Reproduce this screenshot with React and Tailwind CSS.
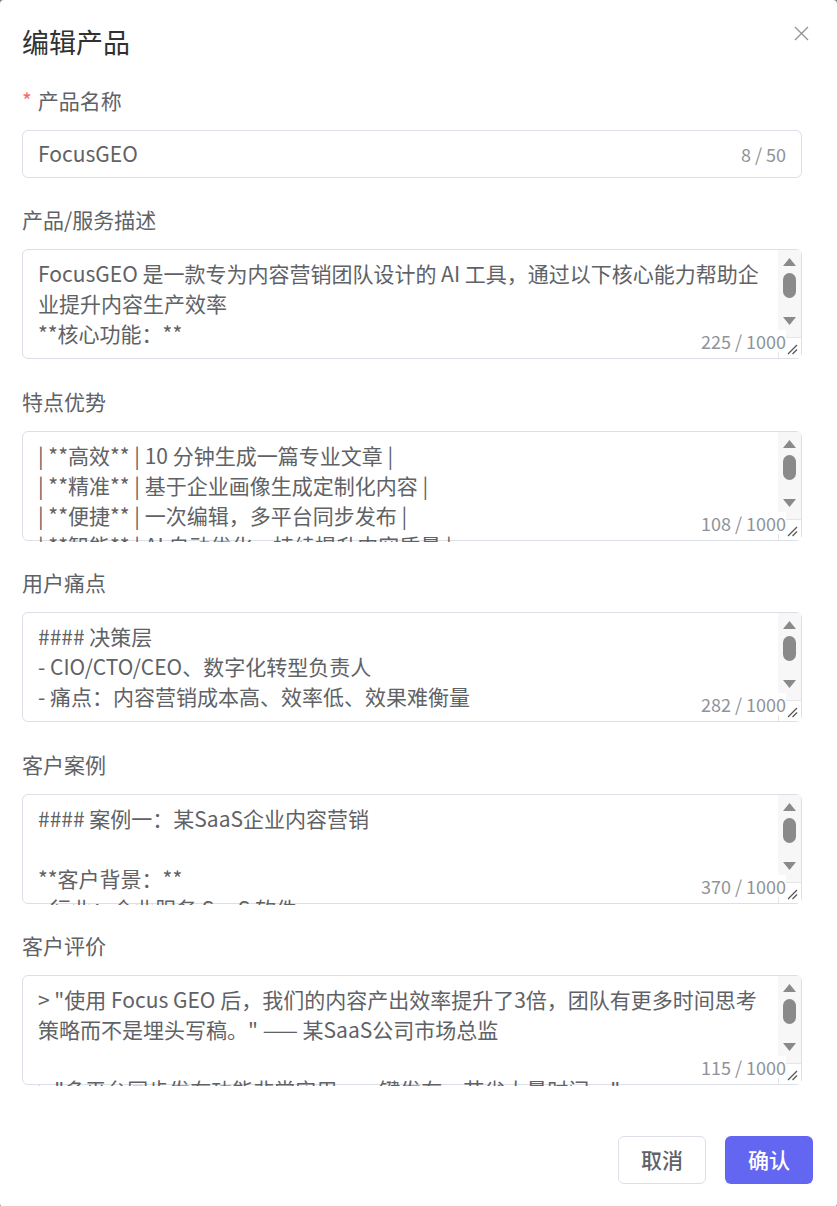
import React from "react";

const FONT = { fontFamily: '"Noto Sans CJK SC", "Noto Sans", sans-serif' };

const ScrollBar = () => (
  <div className="absolute right-0 top-0 w-[23px] h-[88px] bg-[#f7f7f7] flex flex-col items-center pt-[8px]">
    <svg width="13" height="8" viewBox="0 0 13 8">
      <polygon points="6.5,0 13,8 0,8" fill="#8a8a8a" />
    </svg>
    <div className="w-[13px] h-[25px] rounded-full bg-[#8a8a8a] mt-[7px]" />
    <svg width="13" height="8" viewBox="0 0 13 8" className="mt-[19px]">
      <polygon points="0,0 13,0 6.5,8" fill="#8a8a8a" />
    </svg>
  </div>
);

const ResizeCorner = () => (
  <div className="absolute right-0 bottom-0 w-[23px] h-[21px] bg-white border-t border-l border-[#e6e6e6] flex items-end justify-end pr-[3px] pb-[3px]">
    <svg width="11" height="11" viewBox="0 0 11 11">
      <line x1="10" y1="1" x2="1" y2="10" stroke="#555" strokeWidth="1.2" />
      <line x1="10" y1="5.5" x2="5.5" y2="10" stroke="#555" strokeWidth="1.2" />
    </svg>
  </div>
);

const TextBox = ({ lines, count }) => (
  <div className="relative h-[110px] rounded-[6px] border border-[#dcdfe6]">
    <div className="h-[110px] overflow-hidden pl-[15px] pt-[8px] pr-[30px] text-[21px] leading-[30px] text-[#606266]">
      {lines.map((l, i) => (
        <div key={i} className="whitespace-nowrap h-[30px]">
          {l}
        </div>
      ))}
    </div>
    <ScrollBar />
    <ResizeCorner />
    <span className="absolute right-[15px] bottom-[6px] text-[18px] leading-[22px] text-[#909399] bg-white">
      {count}
    </span>
  </div>
);

const Label = ({ children, required, mb }) => (
  <div className={`text-[21px] leading-[30px] text-[#606266] ${mb}`}>
    {required && <span className="text-[#f56c6c] mr-[6px]">*</span>}
    {children}
  </div>
);

const fields = [
  {
    label: "产品/服务描述",
    count: "225 / 1000",
    lines: [
      "FocusGEO 是一款专为内容营销团队设计的 AI 工具，通过以下核心能力帮助企",
      "业提升内容生产效率",
      "**核心功能：**",
      "",
    ],
  },
  {
    label: "特点优势",
    count: "108 / 1000",
    lines: [
      "| **高效** | 10 分钟生成一篇专业文章 |",
      "| **精准** | 基于企业画像生成定制化内容 |",
      "| **便捷** | 一次编辑，多平台同步发布 |",
      "| **智能** | AI 自动优化，持续提升内容质量 |",
    ],
  },
  {
    label: "用户痛点",
    count: "282 / 1000",
    lines: [
      "#### 决策层",
      "- CIO/CTO/CEO、数字化转型负责人",
      "- 痛点：内容营销成本高、效率低、效果难衡量",
      "",
    ],
  },
  {
    label: "客户案例",
    count: "370 / 1000",
    lines: [
      "#### 案例一：某SaaS企业内容营销",
      "",
      "**客户背景：**",
      "- 行业：企业服务 SaaS 软件",
    ],
  },
  {
    label: "客户评价",
    count: "115 / 1000",
    lines: [
      '> "使用 Focus GEO 后，我们的内容产出效率提升了3倍，团队有更多时间思考',
      '策略而不是埋头写稿。" —— 某SaaS公司市场总监',
      "",
      '> "多平台同步发布功能非常实用，一键发布，节省大量时间。"',
    ],
  },
];

export default function App() {
  return (
    <div className="min-h-screen bg-[#808080]" style={FONT}>
      <div className="min-h-screen bg-white rounded-[4px] relative">
        <button className="absolute right-[28px] top-[25px] w-[16px] h-[16px] flex items-center justify-center">
          <svg width="15" height="15" viewBox="0 0 15 15">
            <path d="M1 1 L14 14 M14 1 L1 14" stroke="#909399" strokeWidth="1.3" />
          </svg>
        </button>
        <div className="pl-[22px] pr-[35px] pt-[24px]">
          <h1 className="text-[27px] leading-[36px] text-[#303133] font-normal">编辑产品</h1>

          <div className="mt-[25px]">
            <Label required mb="mb-[15px]">
              产品名称
            </Label>
            <div className="h-[48px] rounded-[6px] border border-[#dcdfe6] flex items-center justify-between pl-[15px] pr-[15px]">
              <span className="text-[21px] text-[#606266]">FocusGEO</span>
              <span className="text-[18px] text-[#909399]">8 / 50</span>
            </div>
          </div>

          {fields.map((f, i) => (
            <div key={f.label} className={i === 0 ? "mt-[26px]" : "mt-[26.5px]"}>
              <Label mb="mb-[15px]">{f.label}</Label>
              <TextBox lines={f.lines} count={f.count} />
            </div>
          ))}
        </div>

        <div className="flex justify-end gap-[19px] pr-[24px] mt-[51px] pb-[23px]">
          <button className="w-[88px] h-[48px] rounded-[6px] border border-[#dcdfe6] bg-white text-[21px] font-medium text-[#606266]">
            取消
          </button>
          <button className="w-[88px] h-[48px] rounded-[6px] bg-[#6366f1] text-[21px] font-medium text-white">
            确认
          </button>
        </div>
      </div>
    </div>
  );
}
